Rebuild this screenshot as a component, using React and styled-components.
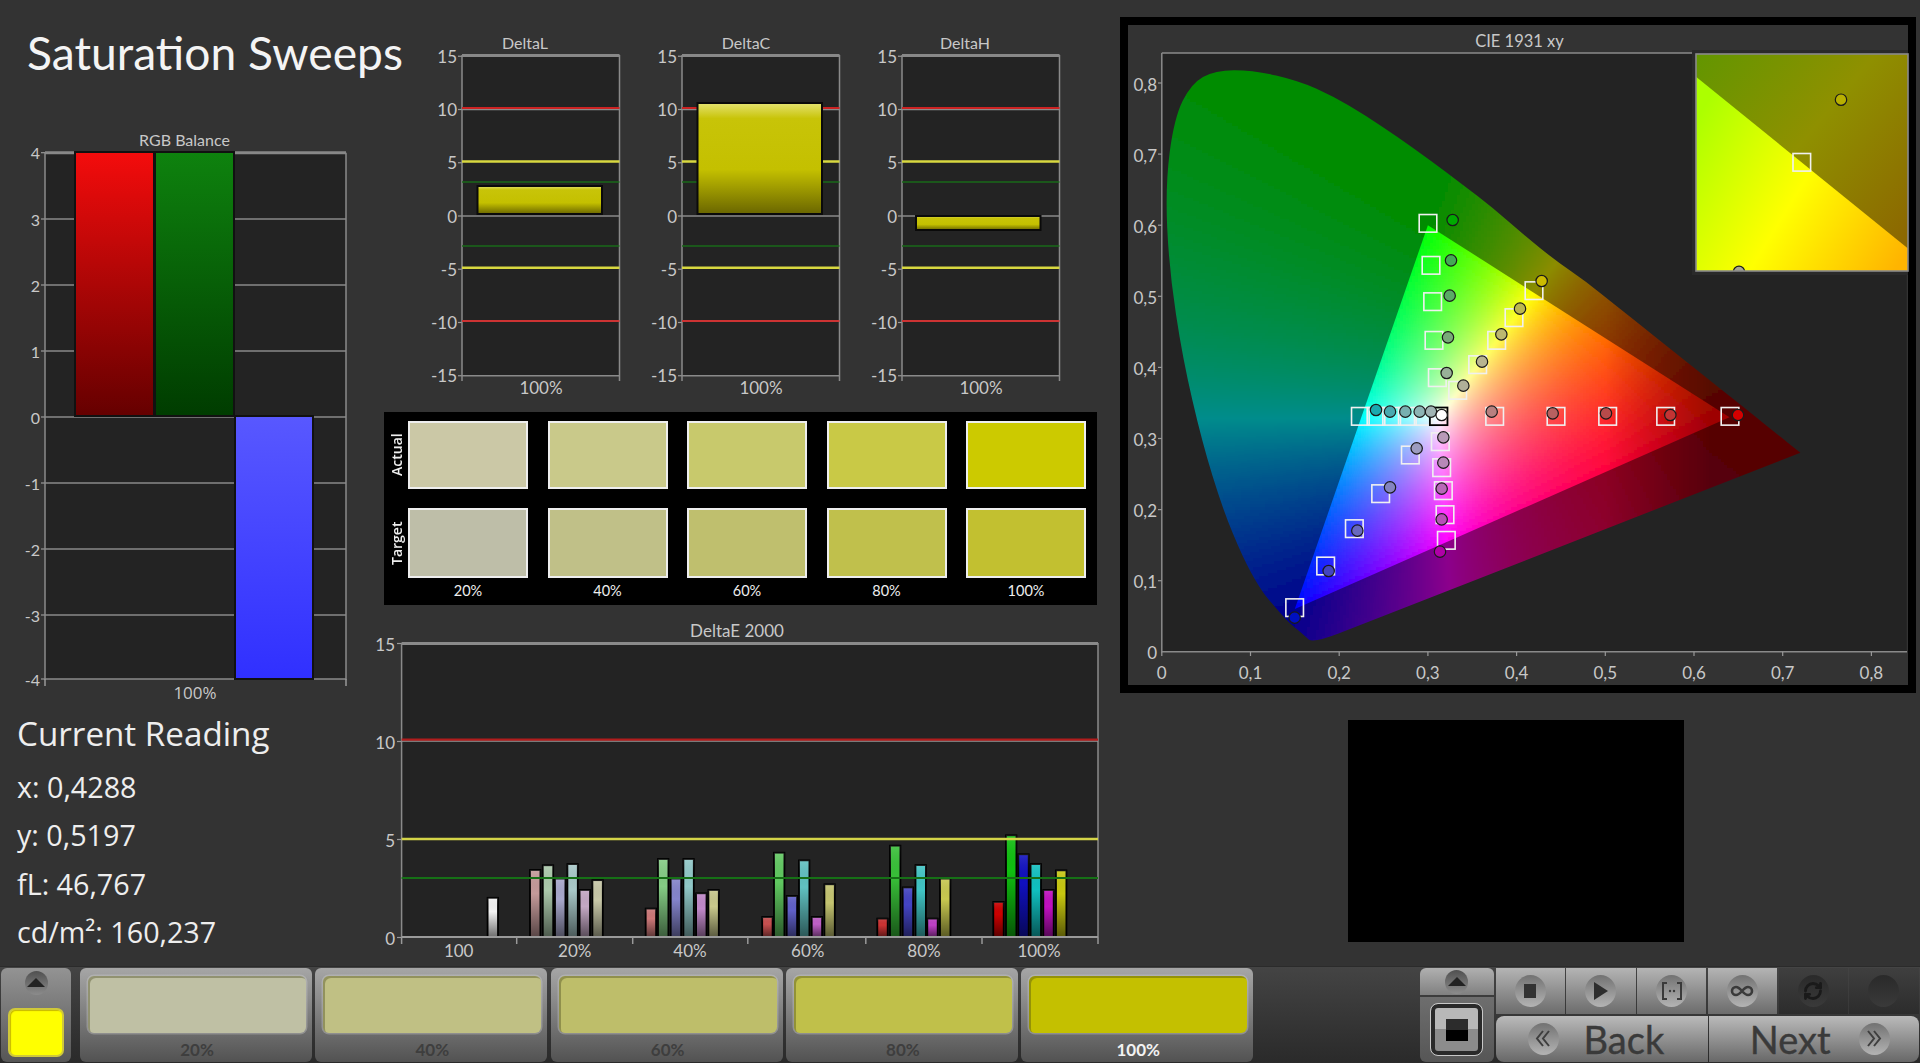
import React, { useMemo } from "react";
import styled, { createGlobalStyle } from "styled-components";
import { Infinity as InfinityIcon, RefreshCw } from "lucide-react";

const Global = createGlobalStyle`
  html, body { margin: 0; padding: 0; background: #333; overflow: hidden; }
  #root { width: 1920px; height: 1063px; }
  * { box-sizing: border-box; }
`;

const Page = styled.div`
  width: 1920px; height: 1063px; display: flex; flex-direction: column;
  background: #333; font-family: Lato, "Open Sans", sans-serif; color: #eee;
`;
const Main = styled.main`display: flex; height: 967px;`;
const LeftColumn = styled.section`width: 370px; flex: none; display: flex; flex-direction: column;`;
const MiddleColumn = styled.section`width: 750px; flex: none; display: flex; flex-direction: column;`;
const RightColumn = styled.section`width: 800px; flex: none; padding-top: 17px;`;

const Title = styled.h1`
  margin: 0; height: 130px; padding: 20px 0 0 27px; font-family: Lato, sans-serif; font-weight: 400;
  font-size: 46.2px; line-height: 65px; color: #f4f4f4; white-space: nowrap; font-feature-settings: "liga" 1;
`;
const Readings = styled.div`padding: 5.5px 0 0 17px; font-family: "Open Sans", sans-serif; color: #eee;`;
const ReadingHead = styled.div`font-size: 33.2px; line-height: 44px; margin-bottom: 7.5px; white-space: nowrap;`;
const ReadingLine = styled.div`font-size: 28.7px; line-height: 48.3px; white-space: nowrap;`;

const ChartSvg = styled.svg`display: block; flex: none; overflow: visible;`;
const Label = styled.text`
  font-family: ${(p) => p.$font || "Lato, sans-serif"}; font-size: ${(p) => p.$size || 17}px; fill: ${(p) => p.$fill || "#c8c8c8"};
  text-anchor: ${(p) => p.$anchor || "middle"}; dominant-baseline: central;
`;
const DeltaRow = styled.div`display: flex; gap: 1px; margin: 28px 0 0 60px; height: 372px;`;

const SwatchPanel = styled.div`
  width: 713px; height: 193px; margin: 12px 0 0 14px; padding-top: 9px; background: #000;
  display: flex; flex-direction: column;
`;
const SwatchRow = styled.div`display: flex; height: ${(p) => p.$h}px; margin-bottom: ${(p) => p.$mb || 0}px;`;
const SideLabel = styled.div`
  width: 24px; flex: none; display: flex; align-items: center; justify-content: center;
  writing-mode: vertical-rl; transform: rotate(180deg); font: 600 14px "Open Sans", sans-serif; color: #eee;
`;
const Cells = styled.div`display: flex; gap: 19.5px;`;
const Swatch = styled.div`width: 120px; height: 100%; border: 2px solid #eee; background: ${(p) => p.$c};`;
const SwatchCaption = styled.div`width: 120px; text-align: center; font: 400 14.5px Lato, sans-serif; color: #eee; line-height: 26px;`;

const CieFrame = styled.div`width: 796px; height: 676px; margin-left: 0; border: 8px solid #000; background: #333;`;
const BlackBox = styled.div`width: 336px; height: 222px; margin: 27px 0 0 228px; background: #000;`;

const Toolbar = styled.footer`
  height: 96px; display: flex; padding: 1px 1.4px 1px 1px; background: linear-gradient(#444, #2a2a2a);
  box-shadow: 0 -1px 0 #2b2b2b;
`;
const SideButton = styled.div`
  width: 70px; flex: none; border-radius: 6px; background: linear-gradient(#939393, #565656);
  display: flex; flex-direction: column; align-items: center; padding-top: 3px;
`;
const Oval = styled.div`
  width: ${(p) => p.$w || 31}px; height: ${(p) => p.$h || 32}px; flex: none; border-radius: 50%;
  display: flex; align-items: center; justify-content: center;
  background: ${(p) => p.$dark ? "linear-gradient(#2a2a2a, #3a3a3a)" : p.$side ? "linear-gradient(#505050, #8c8c8c)" : "linear-gradient(#727272, #b4b4b4)"};
`;
const YellowChip = styled.div`
  width: 56px; height: 49px; margin-top: 13px; border-radius: 7px; background: #ff0;
  border: 2px solid #cfc83a; box-shadow: inset 1px 1px 1px #c8b800;
`;
const SwatchBar = styled.div`display: flex; gap: 3.3px; margin-left: 9px;`;
const SwatchButton = styled.div`
  width: 232px; border-radius: 6px; background: linear-gradient(#a6a6a6, #8a8a8a 35%, #525252);
  padding: 8px 6px 0 8px; display: flex; flex-direction: column;
`;
const ButtonColor = styled.div`
  height: 57px; border-radius: 6px; background: ${(p) => p.$c};
  box-shadow: inset 2px 2px 0 rgba(60,60,20,.35), 0 0 0 1.5px rgba(210,210,210,.35);
`;
const ButtonCaption = styled.div`
  text-align: center; margin-top: 7px; font: 700 17px Lato, sans-serif;
  color: ${(p) => (p.$active ? "#f2f2f2" : "#3e3e3e")}; line-height: 20px;
`;
const Controls = styled.div`margin-left: auto; display: flex; gap: 1.5px;`;
const ArrowPanel = styled.div`width: 74.5px; display: flex; flex-direction: column; gap: 2px;`;
const ArrowTop = styled.div`
  height: 27px; border-radius: 6px 6px 0 0; background: linear-gradient(#b0b0b0, #808080);
  display: flex; justify-content: center; padding-top: 2px;
`;
const ArrowBottom = styled.div`
  flex: 1; border-radius: 0 0 6px 6px; background: linear-gradient(#6e6e6e, #565656);
  display: flex; justify-content: center; padding-top: 7px;
`;
const StopFrame = styled.div`
  width: 51px; height: 51px; border-radius: 7px; border: 4px solid #2a2a2a; outline: 1px solid #c8c8c8;
  background: linear-gradient(#b8b8b8 0 50%, #8c8c8c 50% 100%); display: flex; align-items: center; justify-content: center;
`;
const StopSquare = styled.div`width: 22px; height: 22px; background: linear-gradient(#2c2c2c 0 50%, #000 50% 100%);`;
const ControlStack = styled.div`width: 423px; display: flex; flex-direction: column; gap: 1.5px;`;
const TopRow = styled.div`display: flex; height: 46px; gap: 1.5px;`;
const RoundButton = styled.div`
  flex: 1; display: flex; align-items: center; justify-content: center;
  background: ${(p) => p.$dark ? "linear-gradient(#3f3f3f, #2c2c2c)" : "linear-gradient(#b4b4b4, #6c6c6c)"};
`;
const BottomRow = styled.div`display: flex; flex: 1; gap: 1.5px;`;
const NavButton = styled.div`
  flex: 1; display: flex; align-items: center; gap: ${(p) => p.$gap}px;
  justify-content: ${(p) => (p.$end ? "flex-end" : "flex-start")};
  padding: ${(p) => (p.$end ? "0 29px 0 0" : "0 0 0 32px")};
  border-radius: ${(p) => (p.$end ? "0 8px 8px 0" : "8px 0 0 8px")};
  background: linear-gradient(#bababa, #686868);
  font: 400 38px Lato, sans-serif; color: #3a3a3a; line-height: 46px; -webkit-text-stroke: 0.4px #3a3a3a;
`;

/* ---------- RGB balance ---------- */
const RGB_Y = [[4, 152.7], [3, 219], [2, 285], [1, 351], [0, 417], [-1, 483], [-2, 549], [-3, 615], [-4, 679]];
function RgbChart() {
  return (
    <ChartSvg width="370" height="576" viewBox="0 130 370 576">
      <defs>
        <linearGradient id="rgbR" x1="0" y1="0" x2="0" y2="1"><stop offset="0" stopColor="#f40c0c" /><stop offset="1" stopColor="#650000" /></linearGradient>
        <linearGradient id="rgbG" x1="0" y1="0" x2="0" y2="1"><stop offset="0" stopColor="#0e820e" /><stop offset="1" stopColor="#003c00" /></linearGradient>
        <linearGradient id="rgbB" x1="0" y1="0" x2="0" y2="1"><stop offset="0" stopColor="#5858ff" /><stop offset="1" stopColor="#3030ff" /></linearGradient>
      </defs>
      <Label x="184.5" y="139" $size={16}>RGB Balance</Label>
      <rect x="45" y="152.7" width="301" height="526.3" fill="#232323" />
      {RGB_Y.slice(1, 8).map(([v, y]) => <line key={v} x1="45" x2="346" y1={y} y2={y} stroke="#8a8a8a" strokeWidth="1.5" />)}
      {RGB_Y.map(([v, y]) => (
        <g key={v}>
          <line x1="41" x2="45" y1={y} y2={y} stroke="#999" strokeWidth="1.2" />
          <Label x="40" y={y} $anchor="end" $size={16}>{v}</Label>
        </g>
      ))}
      <path d="M45 152.7V679H346V152.7" fill="none" stroke="#8a8a8a" strokeWidth="1.5" />
      <line x1="45" x2="346" y1="152.7" y2="152.7" stroke="#888" strokeWidth="3" />
      <path d="M45 679V686M346 679V686" stroke="#999" strokeWidth="1.5" />
      <rect x="75" y="152" width="79" height="264" fill="url(#rgbR)" stroke="#111" strokeWidth="2" />
      <rect x="155" y="152" width="79" height="264" fill="url(#rgbG)" stroke="#111" strokeWidth="2" />
      <rect x="235" y="416" width="78" height="263" fill="url(#rgbB)" stroke="#111" strokeWidth="2" />
      <Label x="195" y="692" $size={17} $font="'Open Sans', sans-serif">100%</Label>
    </ChartSvg>
  );
}

/* ---------- Delta charts ---------- */
const D_Y = (v) => 216 - v * 10.65;
function DeltaChart({ name, x0, titleX, bar, barX = 15.5 }) {
  const L = x0 + 32, R = L + 157.5;
  const id = `bar${name}`;
  return (
    <ChartSvg width="219" height="372" viewBox={`${x0} 28 219 372`}>
      <defs>
        <linearGradient id={id} x1="0" y1="0" x2="0" y2="1">
          <stop offset="0" stopColor="#e4e270" /><stop offset=".14" stopColor="#c8c408" />
          <stop offset=".6" stopColor="#c4c000" /><stop offset="1" stopColor="#6a6600" />
        </linearGradient>
      </defs>
      <Label x={titleX} y="42" $size={16}>{name}</Label>
      <rect x={L} y="55" width="157.5" height="320" fill="#232323" />
      {[15, 10, 5, 0, -5, -10, -15].map((v) => (
        <g key={v}>
          <line x1={L - 4} x2={L} y1={D_Y(v)} y2={D_Y(v)} stroke="#999" strokeWidth="1.2" />
          <Label x={L - 5} y={D_Y(v)} $anchor="end" $size={17}>{v}</Label>
        </g>
      ))}
      {[10, 0, -15].map((v) => <line key={v} x1={L} x2={R} y1={D_Y(v)} y2={D_Y(v)} stroke="#8a8a8a" strokeWidth="1.5" />)}
      <path d={`M${L} 55V375M${R} 55V375M${L} 375V381M${R} 375V381`} stroke="#8a8a8a" strokeWidth="1.5" fill="none" />
      <line x1={L} x2={R} y1="55.5" y2="55.5" stroke="#888" strokeWidth="3" />
      <line x1={L} x2={R} y1="108" y2="108" stroke="#c22" strokeWidth="2.2" />
      <line x1={L} x2={R} y1="321" y2="321" stroke="#c33" strokeWidth="2.2" />
      <line x1={L} x2={R} y1="161.5" y2="161.5" stroke="#d8d840" strokeWidth="2.4" />
      <line x1={L} x2={R} y1="267.7" y2="267.7" stroke="#d8d840" strokeWidth="2.4" />
      <line x1={L} x2={R} y1="182" y2="182" stroke="#1a6a1a" strokeWidth="1.6" />
      <line x1={L} x2={R} y1="246" y2="246" stroke="#1a6a1a" strokeWidth="1.6" />
      <rect x={L + barX} y={bar[0]} width="124.5" height={bar[1] - bar[0]} fill={`url(#${id})`} stroke="#0a0a0a" strokeWidth="2" />
      <Label x={L + 79} y="387" $size={17}>100%</Label>
    </ChartSvg>
  );
}

/* ---------- DeltaE 2000 ---------- */
const DE = [
  { xs: [492.6], vals: [2.0], cols: ["#f2f2f2"] },
  { xs: [535, 547.8, 560, 572.4, 584.6, 597.4], vals: [3.42, 3.66, 2.98, 3.72, 2.4, 2.9], cols: ["#c49a9a", "#aac8aa", "#a8a8cc", "#a8c8c8", "#c4a8c4", "#c8c8a8"] },
  { xs: [650.7, 663, 675.7, 688.4, 701.1, 713.4], vals: [1.45, 3.98, 2.98, 3.98, 2.23, 2.4], cols: ["#cc7878", "#84cc84", "#8484cc", "#90c8c8", "#c088c8", "#c8c88c"] },
  { xs: [767.2, 779, 791.7, 804, 816.7, 829.4], vals: [1.02, 4.3, 2.09, 3.91, 1.02, 2.69], cols: ["#c85050", "#60c860", "#6060c8", "#60c0c0", "#c060c8", "#c4c470"] },
  { xs: [882.3, 895, 907.7, 920.5, 932.3, 945], vals: [0.94, 4.66, 2.53, 3.67, 0.94, 2.98], cols: ["#cc3333", "#38c038", "#4444c4", "#40c4c4", "#c040c8", "#c8c850"] },
  { xs: [998.3, 1011, 1023.3, 1035.6, 1048.3, 1061], vals: [1.79, 5.19, 4.22, 3.72, 2.4, 3.4], cols: ["#cc0000", "#10c010", "#1010c0", "#10c0c0", "#c010c0", "#c8c810"] },
];
const E_Y = (v) => 937 - v * 19.6;
function DeltaEChart() {
  const ticks = [401.6, 516.7, 632.7, 747.8, 865.8, 982, 1098];
  const caps = [["100", 458.7], ["20%", 574.7], ["40%", 690], ["60%", 807.7], ["80%", 924], ["100%", 1039]];
  return (
    <ChartSvg width="750" height="340" viewBox="370 620 750 340" style={{ marginTop: 15 }}>
      <defs>
        <linearGradient id="eShade" x1="0" y1="0" x2="0" y2="1">
          <stop offset="0" stopColor="#fff" stopOpacity=".12" /><stop offset=".35" stopColor="#000" stopOpacity="0" /><stop offset="1" stopColor="#000" stopOpacity=".55" />
        </linearGradient>
      </defs>
      <Label x="737" y="630" $size={17}>DeltaE 2000</Label>
      <rect x="401.6" y="643.5" width="696.4" height="293.5" fill="#232323" />
      {[15, 10, 5, 0].map((v) => (
        <g key={v}>
          <line x1="397" x2="401.6" y1={E_Y(v) + 0.5} y2={E_Y(v) + 0.5} stroke="#999" strokeWidth="1.2" />
          <Label x="395" y={E_Y(v) + 1} $anchor="end" $size={17}>{v}</Label>
        </g>
      ))}
      <path d="M401.6 643V937M1098 643V937" stroke="#8a8a8a" strokeWidth="1.5" />
      <line x1="401.6" x2="1098" y1="643.5" y2="643.5" stroke="#8a8a8a" strokeWidth="3" />
      <line x1="401.6" x2="1098" y1="741" y2="741" stroke="#999" strokeWidth="1.5" />
      {DE.flatMap((g, gi) => g.xs.map((x, i) => (
        <g key={`${gi}-${i}`}>
          <rect x={x - 5} y={E_Y(g.vals[i])} width="10.4" height={g.vals[i] * 19.6} fill={g.cols[i]} stroke="#000" strokeWidth="1.8" />
          <rect x={x - 5} y={E_Y(g.vals[i])} width="10.4" height={g.vals[i] * 19.6} fill="url(#eShade)" />
        </g>
      )))}
      <line x1="401.6" x2="1098" y1="739.6" y2="739.6" stroke="#b01c1c" strokeWidth="2.4" />
      <line x1="401.6" x2="1098" y1="839" y2="839" stroke="#d4d448" strokeWidth="2.6" />
      <line x1="401.6" x2="1098" y1="878" y2="878" stroke="#167016" strokeWidth="2" />
      <line x1="401.6" x2="1098" y1="937" y2="937" stroke="#9a9a9a" strokeWidth="2" />
      {ticks.map((x) => <line key={x} x1={x} x2={x} y1="937" y2="944" stroke="#999" strokeWidth="1.5" />)}
      {caps.map(([t, x]) => <Label key={t} x={x} y="950" $size={17}>{t}</Label>)}
    </ChartSvg>
  );
}

/* ---------- CIE 1931 ---------- */
const PX = (x) => 1161.8 + 887 * x;
const PY = (y) => 651.8 - 711 * y;
const P = ([x, y]) => `${PX(x).toFixed(1)} ${PY(y).toFixed(1)}`;
const LOCUS_TOP = [
  [.1660,.0170],[.1566,.0277],[.1440,.0400],[.1241,.0678],[.1096,.0908],[.0913,.1327],[.0687,.2007],[.0454,.2950],[.0235,.4127],[.0082,.5384],[.0039,.6548],
  [.0139,.7502],[.0330,.7990],[.0600,.8180],[.1030,.8180],[.1547,.8030],[.1929,.7816],[.2296,.7543],[.2658,.7243],[.3016,.6923],[.3373,.6589],
  [.3731,.6245],[.4087,.5860],[.4441,.5500],[.4788,.5202],[.5125,.4866],[.5448,.4544],[.5752,.4242],[.6270,.3725],[.6658,.3340],[.6915,.3083],[.7200,.2800],
];
const smooth = (pts) => {
  let d = `M${P(pts[0])}`;
  for (let i = 1; i < pts.length - 1; i++) {
    const mid = [(pts[i][0] + pts[i + 1][0]) / 2, (pts[i][1] + pts[i + 1][1]) / 2];
    d += `Q${P(pts[i])} ${P(mid)}`;
  }
  return d + `L${P(pts[pts.length - 1])}`;
};
const locusPath = `${smooth(LOCUS_TOP)}L${P([.2, .026])}Q${P([.172, .0125])} ${P(LOCUS_TOP[0])}Z`;
const triangle = [[.64, .33], [.30, .60], [.15, .06]].map(([x, y]) => `${PX(x).toFixed(1)},${PY(y).toFixed(1)}`).join(" ");

function linearRgb(x, y) {
  const X = x / y, Z = (1 - x - y) / y;
  return [3.2406 * X - 1.5372 - 0.4986 * Z, -0.9689 * X + 1.8758 + 0.0415 * Z, 0.0557 * X - 0.204 + 1.057 * Z];
}
function tint(x, rgb, base) {
  const clamp = rgb.map((c) => Math.max(c, 0));
  const m = Math.max(...clamp) || 1;
  const dim = x < 0.5 ? 1 : Math.max(0.62, 1 - ((x - 0.5) / 0.14) * 0.45);
  const f = (c) => Math.round(base * dim * Math.pow(c / m, 1 / 1.12));
  return `rgb(${f(clamp[0])},${f(clamp[1])},${f(clamp[2])})`;
}

const SQUARES = [
  [644,649],[828,649],[983,649],[1157,649],[1350,649],[241,649],[288,649],[335,649],[382,649],[430,649],
  [444,70],[453,196],[458,305],[462,421],[472,533],[762,272],[702,353],[650,421],[593,494],[533,571],
  [44,1223],[137,1098],[223,986],[302,881],[391,765],[499,1021],[495,944],[490,872],[485,803],[481,725],
];
const CIRCLES = [
  [1374,645,"#d40000"],[1171,645,"#c33434"],[978,640,"#b84a4a"],[818,640,"#b86060"],[635,635,"#b88080"],
  [288,630,"#1aaab0"],[330,635,"#48aab0"],[376,635,"#78b0b0"],[419,635,"#8cb4b4"],[453,635,"#a0b4b4"],
  [518,60,"#00aa00"],[513,181,"#44aa55"],[509,287,"#5aaa66"],[504,412,"#78aa78"],[500,519,"#98b098"],
  [785,243,"#ccbb00"],[720,326,"#bcb850"],[664,403,"#bcb870"],[606,485,"#b8b490"],[550,557,"#b0b098"],
  [44,1253,"#0010c0"],[146,1113,"#4444c0"],[232,992,"#6868c0"],[330,862,"#8484c0"],[410,745,"#9c9cc0"],
  [480,1055,"#b000a8"],[485,958,"#b850b8"],[485,866,"#b868b8"],[490,788,"#b888b8"],[490,712,"#b89ab8"],
];
const zx = (v) => 1280 + v / 3;
const zy = (v) => 200 + v / 3;

function CieChart() {
  const [outer, inner] = useMemo(() => {
    const a = [], b = [];
    const step = 3;
    for (let py = 60; py < 645; py += step) {
      for (let px = 1160; px < 1810; px += step) {
        const x = (px + 1.5 - 1161.8) / 887, y = (651.8 - py - 1.5) / 711;
        if (y <= 0.005) continue;
        const rgb = linearRgb(x, y);
        const ratio = Math.min(...rgb) / Math.max(...rgb);
        const key = `${px}-${py}`;
        if (ratio < 0.04) a.push(<rect key={key} x={px} y={py} width={step + 0.4} height={step + 0.4} fill={tint(x, rgb, 140)} />);
        if (ratio > -0.12) b.push(<rect key={key} x={px} y={py} width={step + 0.4} height={step + 0.4} fill={tint(x, rgb, 255)} />);
      }
    }
    return [a, b];
  }, []);
  return (
    <ChartSvg width="780" height="660" viewBox="1128 25 780 660">
      <defs>
        <clipPath id="locus"><path d={locusPath} /></clipPath>
        <clipPath id="srgb"><polygon points={triangle} /></clipPath>
        <filter id="soft" x="0" y="0" width="1" height="1"><feGaussianBlur stdDeviation="1.2" /></filter>
        <linearGradient id="insetUp" gradientUnits="userSpaceOnUse" x1="1696" y1="54" x2="1908" y2="230">
          <stop offset="0" stopColor="#629600" /><stop offset=".5" stopColor="#8f9000" /><stop offset="1" stopColor="#8c6800" />
        </linearGradient>
        <linearGradient id="insetLow" gradientUnits="userSpaceOnUse" x1="1696" y1="120" x2="1908" y2="250">
          <stop offset="0" stopColor="#acff00" /><stop offset=".5" stopColor="#ffff00" /><stop offset="1" stopColor="#ffb400" />
        </linearGradient>
        <clipPath id="insetClip"><rect x="1696" y="54" width="212" height="217" /></clipPath>
      </defs>
      <Label x="1519.5" y="41" $size={16.5}>CIE 1931 xy</Label>
      <rect x="1161.8" y="53" width="745" height="598.8" fill="#232323" />
      <g clipPath="url(#locus)"><g filter="url(#soft)">{outer}</g></g>
      <g clipPath="url(#srgb)"><g filter="url(#soft)">{inner}</g></g>
      <path d="M1161.8 53V651.8H1907M1161.8 53H1696" fill="none" stroke="#8a8a8a" strokeWidth="1.5" />
      {[1,2,3,4,5,6,7,8].map((i) => (
        <g key={i}>
          <line x1="1158" x2="1161.8" y1={PY(i / 10)} y2={PY(i / 10)} stroke="#999" strokeWidth="1.2" />
          <Label x="1157" y={PY(i / 10) + 1} $anchor="end" $size={17}>{`0,${i}`}</Label>
        </g>
      ))}
      <Label x="1157" y="652" $anchor="end" $size={17}>0</Label>
      <Label x="1161.8" y="672" $size={17}>0</Label>
      {[1,2,3,4,5,6,7,8].map((i) => (
        <g key={i}>
          <line x1={PX(i / 10)} x2={PX(i / 10)} y1="651.8" y2="656" stroke="#999" strokeWidth="1.2" />
          <Label x={PX(i / 10)} y="672" $size={17}>{`0,${i}`}</Label>
        </g>
      ))}
      <line x1="1161.8" x2="1161.8" y1="651.8" y2="656" stroke="#999" strokeWidth="1.2" />
      {SQUARES.map(([x, y], i) => <rect key={i} x={zx(x) - 8.8} y={zy(y) - 8.8} width="17.6" height="17.6" fill="none" stroke="#f0f0f0" strokeWidth="1.6" />)}
      <rect x={zx(476) - 8.8} y={zy(649) - 8.8} width="17.6" height="17.6" fill="none" stroke="#000" strokeWidth="1.8" />
      {CIRCLES.map(([x, y, c], i) => <circle key={i} cx={zx(x)} cy={zy(y)} r="5.7" fill={c} stroke="#1a1a1a" strokeWidth="1.2" />)}
      <circle cx={zx(485)} cy={zy(645)} r="5.7" fill="#fff" stroke="#1a1a1a" strokeWidth="1.2" />
      <rect x="1692" y="50" width="216" height="225" fill="#2a2a2a" />
      <g clipPath="url(#insetClip)">
        <rect x="1696" y="54" width="212" height="217" fill="url(#insetUp)" />
        <polygon points="1696,76.7 1908,248.5 1908,271 1696,271" fill="url(#insetLow)" />
        <circle cx="1739" cy="271.7" r="5.6" fill="#a8a890" stroke="#1a1a1a" strokeWidth="1.2" />
        <circle cx="1841" cy="99.7" r="5.7" fill="#b8b000" stroke="#1a1a1a" strokeWidth="1.2" />
        <rect x="1793" y="153.5" width="17.6" height="17.6" fill="none" stroke="#f0f0f0" strokeWidth="1.6" />
      </g>
      <rect x="1696" y="54" width="212" height="217" fill="none" stroke="#8a8a8a" strokeWidth="1.6" />
    </ChartSvg>
  );
}

/* ---------- small icons ---------- */
const Tri = () => <svg width="18" height="10" viewBox="0 0 18 10"><path d="M9 0 18 9H0Z" fill="#222" /></svg>;
const StopIcon = () => <svg width="12" height="14" viewBox="0 0 12 14"><rect width="12" height="14" fill="#333" /></svg>;
const PlayIcon = () => <svg width="14" height="18" viewBox="0 0 14 18"><path d="M0 0 14 9 0 18Z" fill="#2e2e2e" /></svg>;
const BracketIcon = () => (
  <svg width="20" height="18" viewBox="0 0 20 18"><path d="M5 1H1V17H5M15 1H19V17H15" fill="none" stroke="#3a3a3a" strokeWidth="2" /><circle cx="8" cy="9" r="1.2" fill="#3a3a3a" /><circle cx="12" cy="9" r="1.2" fill="#3a3a3a" /></svg>
);
const Chevrons = ({ flip }) => (
  <svg width="16" height="17" viewBox="0 0 16 17" style={flip ? { transform: "scaleX(-1)" } : undefined}>
    <path d="M8 1 2 8.500 8 16M14 1 8 8.500 14 16" fill="none" stroke="#3e3e3e" strokeWidth="2" />
  </svg>
);

const ACTUAL = ["#cbc8a6", "#c9c98a", "#c8c96c", "#c9c946", "#ccca00"];
const TARGET = ["#bebea8", "#c0c088", "#bfbf6e", "#c0c04c", "#c2c030"];
const STEPS = ["20%", "40%", "60%", "80%", "100%"];
const BTN = ["#bfc0a4", "#c0c084", "#bebe6a", "#c0c04a", "#c4c000"];

export default function App() {
  return (
    <Page>
      <Global />
      <Main>
        <LeftColumn>
          <Title>Saturation Sweeps</Title>
          <RgbChart />
          <Readings>
            <ReadingHead>Current Reading</ReadingHead>
            <ReadingLine>x: 0,4288</ReadingLine>
            <ReadingLine>y: 0,5197</ReadingLine>
            <ReadingLine>fL: 46,767</ReadingLine>
            <ReadingLine>cd/m²: 160,237</ReadingLine>
          </Readings>
        </LeftColumn>
        <MiddleColumn>
          <DeltaRow>
            <DeltaChart name="DeltaL" x0={430} titleX={525} bar={[186, 214]} />
            <DeltaChart name="DeltaC" x0={650} titleX={746} bar={[103, 214]} />
            <DeltaChart name="DeltaH" x0={869} titleX={964} bar={[216, 230]} barX={14} />
          </DeltaRow>
          <SwatchPanel>
            <SwatchRow $h={68} $mb={19}>
              <SideLabel>Actual</SideLabel>
              <Cells>{ACTUAL.map((c) => <Swatch key={c} $c={c} />)}</Cells>
            </SwatchRow>
            <SwatchRow $h={70}>
              <SideLabel>Target</SideLabel>
              <Cells>{TARGET.map((c) => <Swatch key={c} $c={c} />)}</Cells>
            </SwatchRow>
            <SwatchRow $h={26}>
              <SideLabel />
              <Cells>{STEPS.map((s) => <SwatchCaption key={s}>{s}</SwatchCaption>)}</Cells>
            </SwatchRow>
          </SwatchPanel>
          <DeltaEChart />
        </MiddleColumn>
        <RightColumn>
          <CieFrame><CieChart /></CieFrame>
          <BlackBox />
        </RightColumn>
      </Main>
      <Toolbar>
        <SideButton>
          <Oval $side $w={23} $h={24}><Tri /></Oval>
          <YellowChip />
        </SideButton>
        <SwatchBar>
          {STEPS.map((s, i) => (
            <SwatchButton key={s}>
              <ButtonColor $c={BTN[i]} />
              <ButtonCaption $active={i === 4}>{s}</ButtonCaption>
            </SwatchButton>
          ))}
        </SwatchBar>
        <Controls>
          <ArrowPanel>
            <ArrowTop><Oval $side $w={23} $h={24}><Tri /></Oval></ArrowTop>
            <ArrowBottom><StopFrame><StopSquare /></StopFrame></ArrowBottom>
          </ArrowPanel>
          <ControlStack>
            <TopRow>
              <RoundButton><Oval><StopIcon /></Oval></RoundButton>
              <RoundButton><Oval><PlayIcon /></Oval></RoundButton>
              <RoundButton><Oval><BracketIcon /></Oval></RoundButton>
              <RoundButton><Oval><InfinityIcon size={24} color="#3a3a3a" strokeWidth={2.6} /></Oval></RoundButton>
              <RoundButton $dark><Oval $dark><RefreshCw size={20} color="#1a1a1a" strokeWidth={3.4} /></Oval></RoundButton>
              <RoundButton $dark><Oval $dark /></RoundButton>
            </TopRow>
            <BottomRow>
              <NavButton $gap={25}><Oval><Chevrons /></Oval>Back</NavButton>
              <NavButton $end $gap={28}>Next<Oval><Chevrons flip /></Oval></NavButton>
            </BottomRow>
          </ControlStack>
        </Controls>
      </Toolbar>
    </Page>
  );
}
